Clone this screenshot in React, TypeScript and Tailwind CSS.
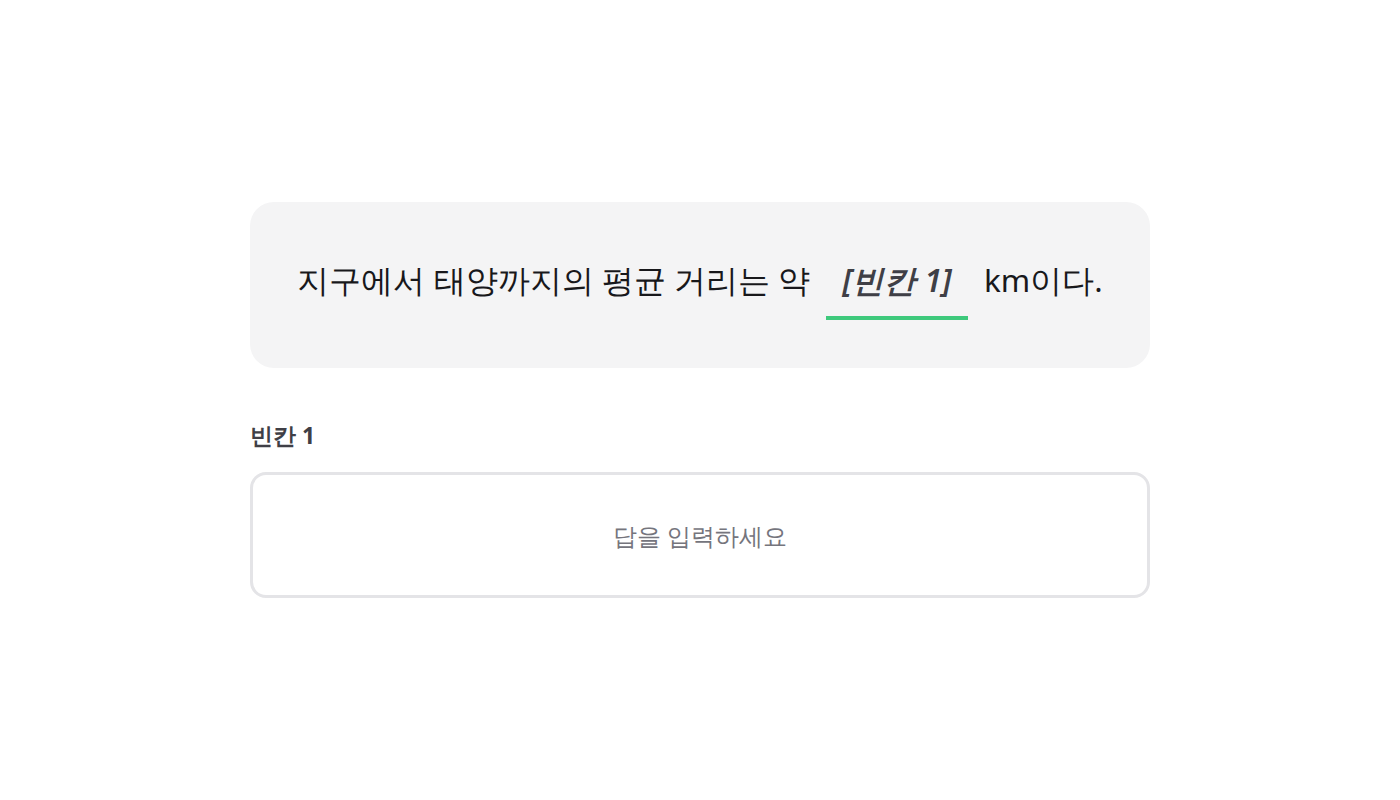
export default function App() {
  return (
    <div className="min-h-screen w-full bg-white flex items-center justify-center font-sans">
      <div className="w-[900px] flex flex-col">
        {/* Question card */}
        <div className="h-[166px] rounded-3xl bg-[#f4f4f5] flex items-center justify-center">
          <p className="text-[31.5px] leading-[48px] text-[#18181b] pt-[6px]">
            지구에서 태양까지의 평균 거리는 약{' '}
            <span className="inline-block mx-2 px-4 pb-3 border-b-4 border-[#3ec97c] italic font-semibold text-[#3f3f46]">
              [빈칸 1]
            </span>{' '}
            km이다.
          </p>
        </div>

        {/* Answer */}
        <label className="mt-[50px] mb-5 text-[23px] leading-[34px] font-bold text-[#3f3f46]">빈칸 1</label>
        <input
          type="text"
          placeholder="답을 입력하세요"
          className="h-[126px] w-full rounded-2xl border-[3px] border-[#e4e4e7] bg-white text-center text-2xl text-[#18181b] placeholder:text-[#75757d] outline-none"
        />
      </div>
    </div>
  )
}
